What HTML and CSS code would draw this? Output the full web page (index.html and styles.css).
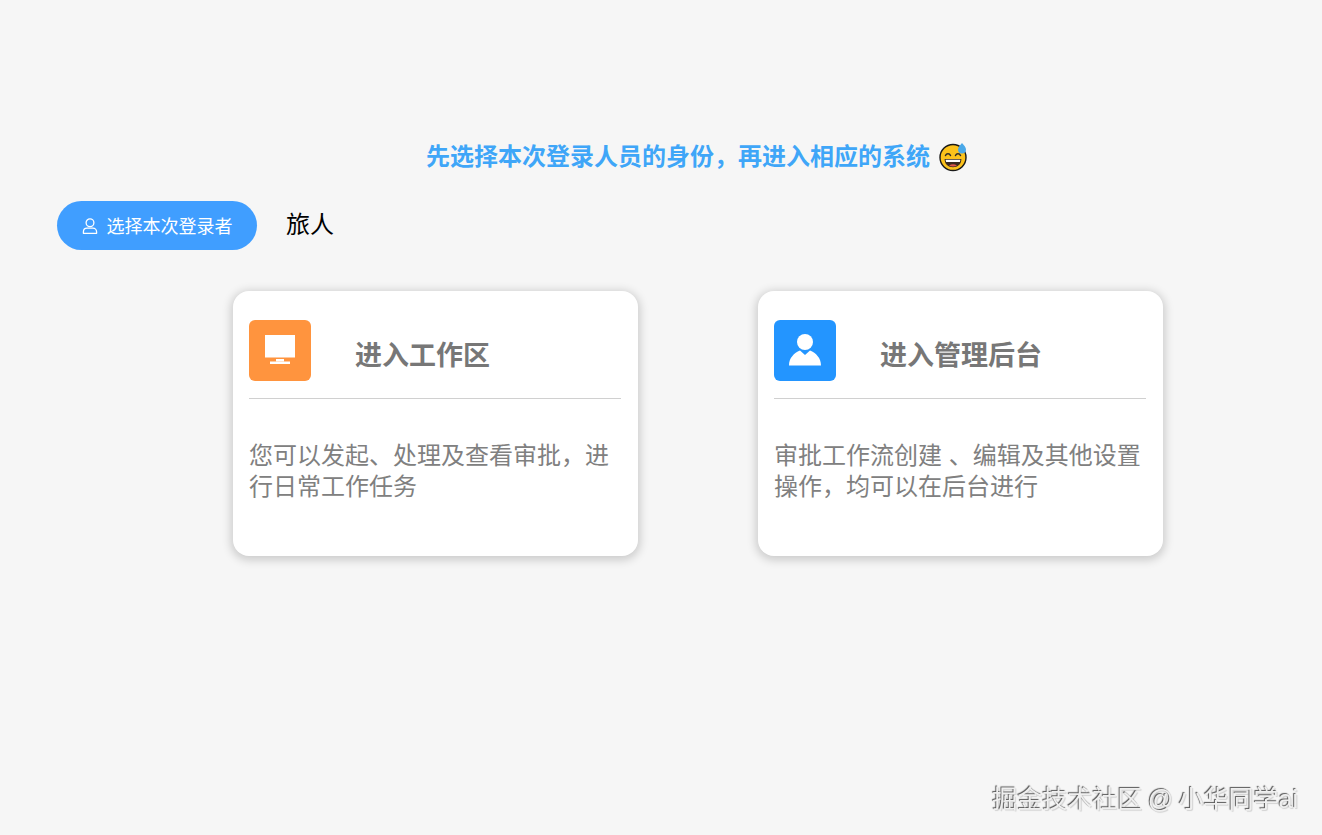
FILE: index.html
```html
<!DOCTYPE html>
<html lang="zh-CN">
<head>
<meta charset="utf-8">
<title>选择身份</title>
<link rel="stylesheet" href="styles.css">
</head>
<body>
<main class="page">
  <h1 class="headline">
    <span>先选择本次登录人员的身份，再进入相应的系统</span>
    <svg class="emoji" viewBox="0 0 30 30" aria-hidden="true">
      <circle cx="14" cy="15.500" r="13" fill="#fcc21b" stroke="#1a1a1a" stroke-width="1.400"/>
      <path d="M6.500 13.500c1-2.400 4-2.400 5 0M16.500 13.500c1-2.400 4-2.400 5 0" fill="none" stroke="#2b2b2b" stroke-width="1.500" stroke-linecap="round"/>
      <path d="M5.600 17h16.800c0 5.200-3.600 8.200-8.400 8.200s-8.400-3-8.400-8.200z" fill="#3a2a20"/>
      <path d="M6.600 17.700h14.800l-.5 2.300H7.100z" fill="#fff"/>
      <path d="M10 23.500c2.500-1.600 5.500-1.600 8 0-2.500 1.400-5.500 1.400-8 0z" fill="#e2574c"/>
      <path d="M23 1c2 2.500 4 4.300 4 6.500a4 4 0 0 1-8 0c0-2.200 2-4 4-6.500z" fill="#4aa8e8"/>
    </svg>
  </h1>
  <div class="identity">
    <button class="pick" type="button">
      <svg class="pick-icon" viewBox="0 0 16 16" aria-hidden="true">
        <circle cx="8" cy="4.800" r="3.900" fill="none" stroke="#fff" stroke-width="1.300"/>
        <path d="M1.400 15.300v-1.300c0-2.400 1.700-3.800 3.700-3.800h5.800c2 0 3.700 1.400 3.700 3.800v1.300z" fill="none" stroke="#fff" stroke-width="1.300" stroke-linejoin="round"/>
      </svg>
      <span class="pick-label">选择本次登录者</span>
    </button>
    <span class="name">旅人</span>
  </div>
  <section class="cards">
    <article class="card">
      <header class="card-head">
        <div class="badge badge-orange">
          <svg viewBox="0 0 32 32" class="badge-icon" aria-hidden="true">
            <path d="M1 1h30v22.500H1z" fill="#fff"/>
            <path d="M12 25h8v2.500h-8z" fill="#fff"/>
            <path d="M6 27.500h20v2.500H6z" fill="#fff"/>
          </svg>
        </div>
        <h2 class="card-title">进入工作区</h2>
      </header>
      <p class="card-text">您可以发起、处理及查看审批，进行日常工作任务</p>
    </article>
    <article class="card">
      <header class="card-head">
        <div class="badge badge-blue">
          <svg viewBox="0 0 32 32" class="badge-icon" aria-hidden="true">
            <circle cx="16" cy="8" r="8" fill="#fff"/>
            <path d="M0 31.500c0-7.500 5-12.500 11-15l5 4.500 5-4.500c6 2.500 11 7.500 11 15z" fill="#fff"/>
          </svg>
        </div>
        <h2 class="card-title">进入管理后台</h2>
      </header>
      <p class="card-text">审批工作流创建 、编辑及其他设置操作，均可以在后台进行</p>
    </article>
  </section>
</main>
<div class="watermark">掘金技术社区 @ 小华同学ai</div>
</body>
</html>
```

FILE: styles.css
```css
* { box-sizing: border-box; }

html, body { height: 100%; }

body {
  margin: 0;
  background: #f6f6f6;
  font-family: "Liberation Sans", "Noto Sans CJK SC", sans-serif;
  overflow: hidden;
}

.page {
  padding: 140px 0 0 57px;
}

.headline {
  display: flex;
  align-items: center;
  gap: 9px;
  height: 34px;
  margin: 0 0 27px 369px;
  color: #3fa6f8;
  font-size: 24px;
  font-weight: 700;
  line-height: 34px;
}

.emoji {
  width: 30px;
  height: 30px;
  flex: none;
}

.identity {
  display: flex;
  align-items: center;
  gap: 29px;
}

.pick {
  display: flex;
  align-items: center;
  justify-content: center;
  gap: 9px;
  width: 200px;
  height: 49px;
  padding: 0;
  border: 0;
  border-radius: 25px;
  background: #409eff;
  color: #fff;
  font: inherit;
  font-size: 18px;
}

.pick-icon {
  width: 16px;
  height: 16px;
  flex: none;
}

.pick-label {
  margin-top: -2px;
}

.name {
  margin-top: -6px;
  color: #000;
  font-size: 24px;
}

.cards {
  display: flex;
  gap: 120px;
  margin: 41px 0 0 176px;
}

.card {
  width: 405px;
  height: 265px;
  padding: 29px 17px 0 16px;
  border-radius: 16px;
  background: #fff;
  box-shadow: 0 2px 10px 2px rgba(0, 0, 0, .18);
}

.card-head {
  display: flex;
  align-items: center;
  height: 79px;
  padding-bottom: 18px;
  border-bottom: 1px solid #d0d0d0;
}

.badge {
  display: flex;
  align-items: center;
  justify-content: center;
  width: 62px;
  height: 61px;
  border-radius: 6px;
}

.badge-orange { background: #ff943e; }
.badge-blue { background: #2395ff; }

.badge-icon {
  width: 32px;
  height: 32px;
}

.card-title {
  margin: 0 0 0 44px;
  padding-top: 12px;
  color: #777;
  font-size: 27px;
  font-weight: 700;
  line-height: 34px;
}

.card-text {
  margin: 41px 0 0;
  color: #808080;
  font-size: 24px;
  line-height: 31px;
}

.watermark {
  position: fixed;
  right: 24px;
  bottom: 19px;
  color: #efefef;
  font-size: 25px;
  line-height: 34px;
  word-spacing: -1.500px;
  text-shadow: -1px -1px 1px #555, 1px 1px 1px rgba(0, 0, 0, .15);
}
```
